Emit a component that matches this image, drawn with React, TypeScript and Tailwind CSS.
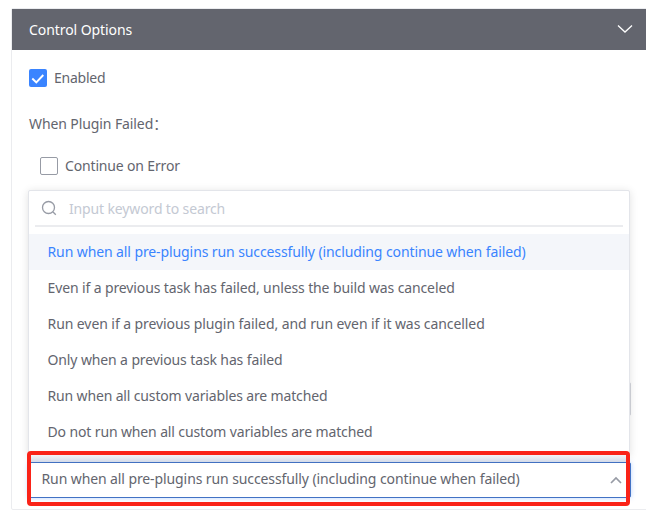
const options = [
  { label: "Run when all pre-plugins run successfully (including continue when failed)", style: "bg-[#f4f6fa] text-[#3a84ff] tracking-[-0.1px]" },
  { label: "Even if a previous task has failed, unless the build was canceled", style: "tracking-[-0.12px]" },
  { label: "Run even if a previous plugin failed, and run even if it was cancelled", style: "tracking-[-0.08px]" },
  { label: "Only when a previous task has failed", style: "tracking-[-0.12px]" },
  { label: "Run when all custom variables are matched", style: "tracking-[-0.15px]" },
  { label: "Do not run when all custom variables are matched", style: "tracking-[-0.13px]" },
];

function Dropdown() {
  return (
    <div className="absolute left-[16px] top-[181px] h-[266px] w-[602px] rounded-t-[2px] border border-[#e3e5ea] bg-white shadow-[0_1px_9px_rgba(0,0,0,0.12)]">
      <div className="mx-[6px] flex h-[36px] items-center border-b-2 border-[#ebecef] pl-[6px]">
        <svg width="16" height="16" viewBox="0 0 16 16" fill="none" stroke="#979ba5" strokeWidth="1.3">
          <circle cx="7.5" cy="7.5" r="6" />
          <path d="M12 12l2.8 2.8" />
        </svg>
        <span className="ml-[12px] tracking-[-0.14px] text-[#c4c9d3]">Input keyword to search</span>
      </div>
      <div className="pt-[7px]">
        {options.map((o) => (
          <div key={o.label} className={`flex h-9 items-center pb-[2px] pl-[18.5px] ${o.style}`}>
            {o.label}
          </div>
        ))}
      </div>
    </div>
  );
}

export default function App() {
  return (
    <div className="h-[529px] w-[646px] overflow-hidden bg-white pl-[11px] pt-2 font-['Noto_Sans','Noto_Sans_CJK_SC',sans-serif] text-[14px] whitespace-nowrap text-[#63656e]">
      <div className="relative h-[502px] w-[650px] rounded-[2px] border border-[#ebecef]">
        <div className="flex h-[41px] items-center bg-[#63656e] pl-[17px] text-white">
          <span className="tracking-[-0.07px]">Control Options</span>
          <svg className="ml-auto mr-[27px] mb-[2px]" width="16" height="10" viewBox="0 0 16 10" fill="none" stroke="#fff" strokeWidth="1.3">
            <path d="M1 1.5l7 6.5 7-6.5" />
          </svg>
        </div>
        <div className="mt-[19px] flex h-[18px] items-center gap-[7px] pl-[17px]">
          <span className="flex size-[18px] items-center justify-center rounded-[2px] bg-[#3a84ff]">
            <svg width="14" height="12" viewBox="0 0 14 12" fill="none" stroke="#fff" strokeWidth="1.9">
              <path d="M1.3 6.5l4 4L12.3 3" />
            </svg>
          </span>
          <span className="pb-[2px] tracking-[-0.25px]">Enabled</span>
        </div>
        <div className="mt-[27px] h-5 pl-[17px] leading-5 tracking-[-0.1px]">When Plugin Failed：</div>
        <div className="mt-[23px] flex h-[18px] items-center gap-[7px] pl-[28px]">
          <span className="size-[18px] rounded-[2px] border border-[#979ba5]" />
          <span className="pb-[2px] tracking-[-0.16px]">Continue on Error</span>
        </div>
        <div className="ml-[17px] mt-[207px] h-[34px] w-[602px] rounded-[2px] border border-[#d5d7de]" />
        <div className="ml-[16px] mt-[46px] flex h-9 w-[603px] items-center rounded-[2px] border border-[#4272c4] pl-[12.5px] pr-[8px] shadow-[0_0_5px_rgba(58,132,255,0.35)]">
          <span className="pb-[3px] tracking-[-0.1px]">Run when all pre-plugins run successfully (including continue when failed)</span>
          <svg className="ml-auto" width="12" height="8" viewBox="0 0 12 8" fill="none" stroke="#979ba5" strokeWidth="1.7">
            <path d="M1 7l5-5 5 5" />
          </svg>
        </div>
        <Dropdown />
        <div className="absolute left-[15px] top-[442px] h-[55px] w-[603px] rounded-[4px] border-4 border-[#fa2318]">
          <div className="h-[7px] bg-gradient-to-b from-[#f4f4f6] to-[#d3dae9]" />
        </div>
      </div>
    </div>
  );
}
